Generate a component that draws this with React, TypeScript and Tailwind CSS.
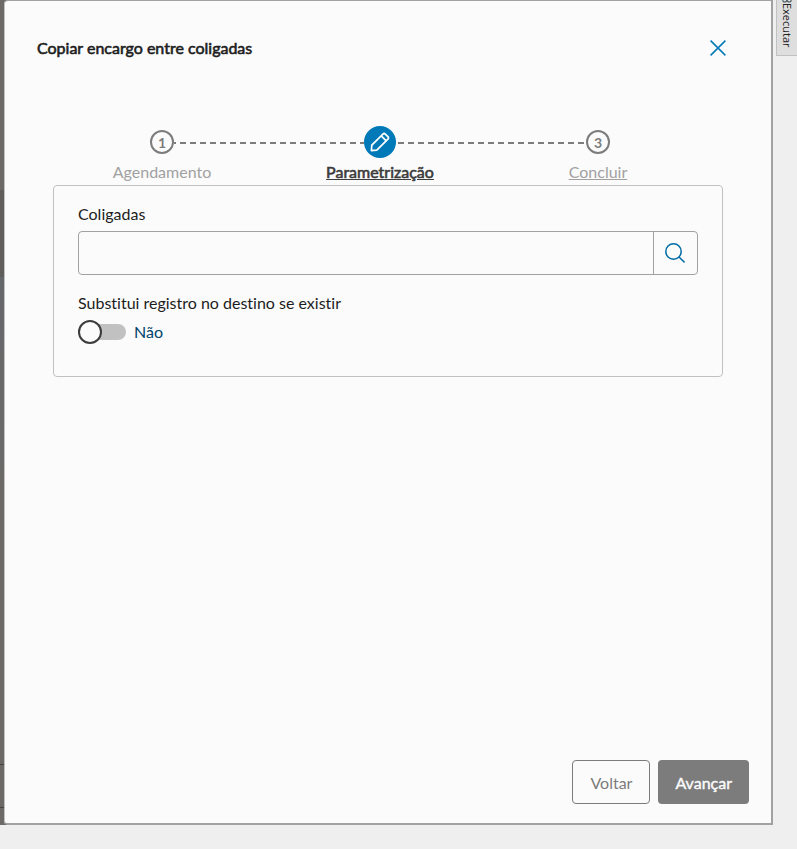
import React, { useState } from 'react';
import clsx from 'clsx';

type StepState = 'done' | 'active' | 'pending';

interface Step {
  number: number;
  label: string;
  state: StepState;
}

const steps: Step[] = [
  { number: 1, label: 'Agendamento', state: 'done' },
  { number: 2, label: 'Parametrização', state: 'active' },
  { number: 3, label: 'Concluir', state: 'pending' },
];

const PencilIcon = () => (
  <svg width="20" height="20" viewBox="0 0 20 20" fill="none" stroke="#fff" strokeWidth="1.7" strokeLinejoin="round" aria-hidden="true">
    <path d="M1.4 18.6 1.8 13.2 12.9 2.1Q14.1.9 15.3 2.1L17.9 4.7Q19.1 5.9 17.9 7.1L6.8 18.2Z" />
    <path d="M11.2 3.8 16.2 8.8" />
  </svg>
);

const SearchIcon = () => (
  <svg width="20" height="20" viewBox="0 0 20 20" fill="none" stroke="#006ba6" strokeWidth="1.5" aria-hidden="true">
    <circle cx="8.5" cy="8.5" r="7.7" />
    <path d="M14 14 19.6 19.4" />
  </svg>
);

const dashes = {
  incoming: 'bg-[repeating-linear-gradient(90deg,#7c7c7c_0px,#7c7c7c_5px,transparent_5px,transparent_9px,#7c7c7c_9px,#7c7c7c_10px)]',
  outgoing: 'bg-[repeating-linear-gradient(90deg,#7c7c7c_0px,#7c7c7c_2px,transparent_2px,transparent_6px,#7c7c7c_6px,#7c7c7c_10px)]',
  outgoingActive: 'bg-[repeating-linear-gradient(90deg,transparent_0px,transparent_2px,#7c7c7c_2px,#7c7c7c_8px,transparent_8px,transparent_10px)]',
};

const Connector = ({ dash }: { dash?: string }) => <span className={clsx('mt-0.5 h-0.5 flex-1', dash)} />;

const StepItem = ({ step, first, last }: { step: Step; first: boolean; last: boolean }) => {
  const active = step.state === 'active';
  const outgoing = active ? dashes.outgoingActive : dashes.outgoing;
  return (
    <li className="flex flex-1 flex-col items-center">
      <div className="flex h-8 w-full items-center">
        <Connector dash={first ? undefined : dashes.incoming} />
        {active ? (
          <span className="flex size-8 items-center justify-center rounded-full bg-[#0079b8]">
            <PencilIcon />
          </span>
        ) : (
          <span className="flex size-6 items-center justify-center rounded-full border-2 border-[#7c7c7c] pt-0.5 text-sm font-bold text-[#7c7c7c]">
            {step.number}
          </span>
        )}
        <Connector dash={last ? undefined : outgoing} />
      </div>
      <button
        type="button"
        className={clsx(
          'mt-0.5 text-base leading-6',
          active ? 'text-[#3c3c3c] underline [-webkit-text-stroke:0.6px_#3c3c3c]' : 'text-[#a1a1a1]',
          step.state === 'pending' && 'underline'
        )}
      >
        {step.label}
      </button>
    </li>
  );
};

export default function App() {
  const [coligadas, setColigadas] = useState('');
  const [replace, setReplace] = useState(false);

  return (
    <div className="flex min-h-screen bg-[#efefef] font-[Lato,sans-serif] text-base text-[#1d1d1d] [font-variant-ligatures:none]">
      <div className="mb-6 flex flex-1 bg-[linear-gradient(#6b6a69_190px,#5f5e5c_190px,#5f5e5c_277px,#66676a_277px,#6b6a69_480px,#6b6a69_764px,#444_764px,#444_765px,#6b6a69_765px,#6b6a69_807px,#444_807px,#444_808px,#6b6a69_808px)] pl-1">
        <section
          role="dialog"
          aria-labelledby="dialog-title"
          className="flex flex-1 flex-col rounded-l border border-r-2 border-b-2 border-[#a1a1a1] border-l-[#c1c1c1] bg-[#fbfbfb]"
        >
          <header className="flex items-center justify-between pt-[35px] pr-[45px] pl-8">
            <h1 id="dialog-title" className="leading-6 [-webkit-text-stroke:0.6px_#1d1d1d]">
              Copiar encargo entre coligadas
            </h1>
            <button type="button" aria-label="Fechar">
              <svg width="16" height="16" viewBox="0 0 16 16" stroke="#0079b8" strokeWidth="1.5" aria-hidden="true">
                <path d="M.6.6 15.4 15.4M15.4.6.6 15.4" />
              </svg>
            </button>
          </header>

          <main className="flex-1 px-12 pt-16">
            <ol className="flex pt-0.5 pr-4 pb-px">
              {steps.map((step, i) => (
                <StepItem key={step.number} step={step} first={i === 0} last={i === steps.length - 1} />
              ))}
            </ol>

            <div className="rounded border border-[#c1c1c1] px-6 pt-4 pb-8">
              <label htmlFor="coligadas" className="block leading-6">
                Coligadas
              </label>
              <div className="mt-[5px] flex h-11 rounded border border-[#a1a1a1]">
                <input
                  id="coligadas"
                  type="text"
                  value={coligadas}
                  onChange={e => setColigadas(e.target.value)}
                  className="min-w-0 flex-1 px-3 outline-none"
                />
                <button type="button" aria-label="Pesquisar" className="flex w-11 items-center justify-center border-l border-[#a1a1a1] pr-0.5">
                  <SearchIcon />
                </button>
              </div>

              <label htmlFor="replace" className="mt-4 block leading-6">
                Substitui registro no destino se existir
              </label>
              <div className="mt-[5px] flex items-center gap-2">
                <input
                  id="replace"
                  type="checkbox"
                  role="switch"
                  checked={replace}
                  onChange={e => setReplace(e.target.checked)}
                  className="flex h-4 w-12 appearance-none items-center rounded-full bg-[#c1c1c1] before:size-6 before:shrink-0 before:rounded-full before:border-2 before:border-[#3c3c3c] before:bg-[#fbfbfb] checked:justify-end"
                />
                <span className="leading-6 text-[#00436b]">{replace ? 'Sim' : 'Não'}</span>
              </div>
            </div>
          </main>

          <footer className="flex justify-end gap-2 pr-[22px] pb-[19px]">
            <button type="button" className="h-11 rounded border border-[#7c7c7c] px-[17px] pt-0.5 text-[#7c7c7c]">
              Voltar
            </button>
            <button type="button" className="h-11 rounded bg-[#7c7c7c] px-[17px] pt-0.5 text-[#fbfbfb] [-webkit-text-stroke:0.4px_#fbfbfb]">
              Avançar
            </button>
          </footer>
        </section>
      </div>

      <aside className="flex w-6 items-start justify-end">
        <button
          type="button"
          className="flex h-14 w-[21px] flex-col items-center border-b border-l border-[#c1c1c1] bg-[#dedede] font-['Open_Sans',sans-serif] text-[11px] text-[#222]"
        >
          <svg width="10" height="3" viewBox="0 0 10 3" fill="none" stroke="#4f5f66" strokeWidth="1.1" aria-hidden="true">
            <circle cx="2.8" cy="0" r="2" />
            <circle cx="7.2" cy="0" r="2" />
          </svg>
          <span className="whitespace-nowrap [writing-mode:vertical-rl]">Executar</span>
        </button>
      </aside>
    </div>
  );
}
